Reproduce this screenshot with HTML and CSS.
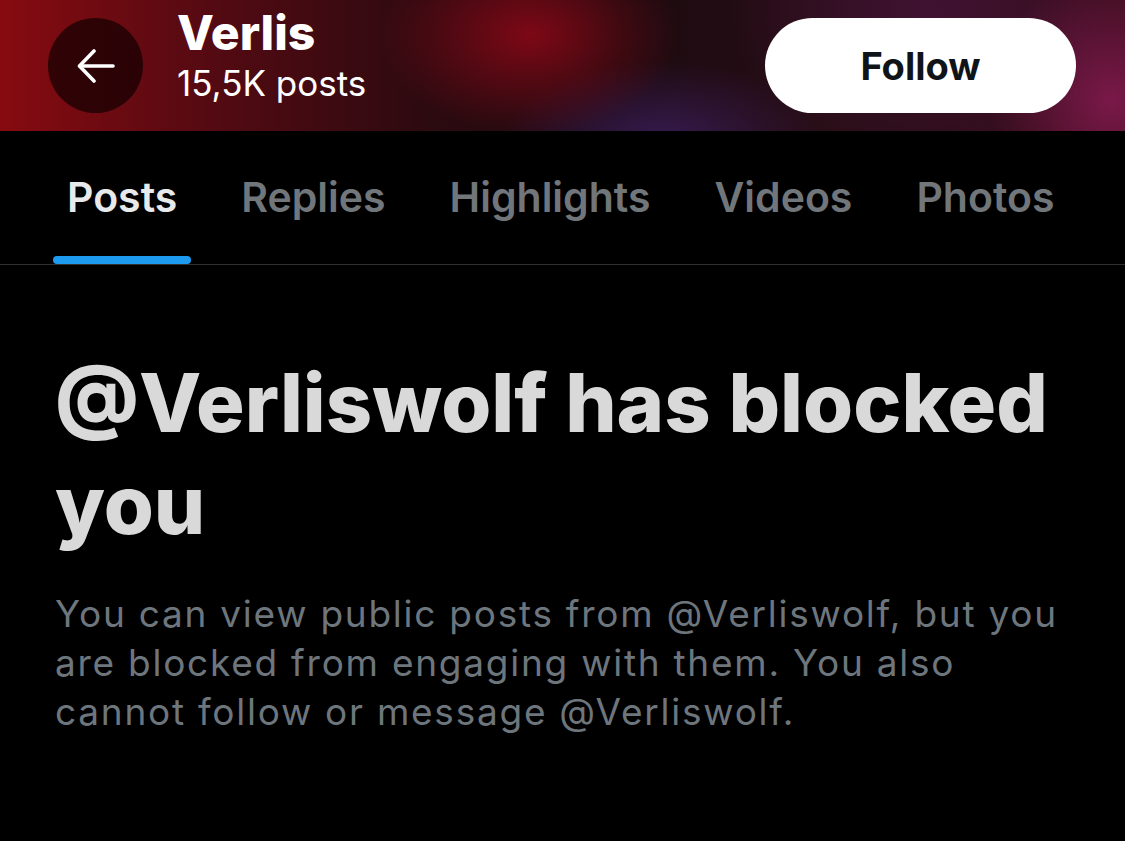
FILE: index.html
```html
<!DOCTYPE html>
<html lang="en">
<head>
<meta charset="utf-8">
<title>Verlis</title>
<link rel="stylesheet" href="styles.css">
</head>
<body>
<header class="top">
  <button class="back" aria-label="Back">
    <svg width="38" height="34" viewBox="0 0 38 34" fill="none" stroke="#fff" stroke-width="3.6" stroke-linecap="round" stroke-linejoin="round">
      <path d="M36 17H3"/>
      <path d="M17 2L2.5 17L17 32"/>
    </svg>
  </button>
  <div class="who">
    <div class="name">Verlis</div>
    <div class="count">15,5K posts</div>
  </div>
  <button class="follow">Follow</button>
</header>
<nav class="tabs">
  <div class="tab active"><span class="label">Posts</span><span class="bar"></span></div>
  <div class="tab"><span class="label">Replies</span></div>
  <div class="tab"><span class="label">Highlights</span></div>
  <div class="tab"><span class="label">Videos</span></div>
  <div class="tab"><span class="label">Photos</span></div>
</nav>
<main class="blocked">
  <h1 class="title">@Verliswolf has blocked you</h1>
  <p class="desc">You can view public posts from @Verliswolf, but you are blocked from engaging with them. You also cannot follow or message @Verliswolf.</p>
</main>
</body>
</html>
```
FILE: styles.css
```css
* { box-sizing: border-box; }
html, body { margin: 0; padding: 0; background: #000; }
body {
  width: 1125px;
  height: 841px;
  overflow: hidden;
  font-family: Inter, "Noto Sans", "Liberation Sans", sans-serif;
  color: #fff;
}
.top {
  height: 131px;
  display: flex;
  align-items: center;
  padding: 0 49px 0 48px;
  background:
    radial-gradient(ellipse 150px 100px at 530px 35px, rgba(135,8,22,0.9), rgba(135,8,22,0) 100%),
    radial-gradient(ellipse 160px 80px at 660px 140px, rgba(60,30,95,0.8), rgba(60,30,95,0) 100%),
    radial-gradient(ellipse 120px 130px at 1110px 100px, rgba(125,25,75,0.95), rgba(125,25,75,0) 100%),
    radial-gradient(ellipse 200px 140px at 930px 10px, rgba(70,20,60,0.7), rgba(70,20,60,0) 100%),
    linear-gradient(90deg, #860b10 0%, #560a12 18%, #2c0a10 38%, #1a0a0e 55%, #2a0e18 75%, #3a0d1c 100%);
}
.back {
  width: 95px;
  height: 95px;
  border-radius: 50%;
  border: 0;
  background: rgba(20,0,2,0.72);
  display: flex;
  align-items: center;
  justify-content: center;
  padding: 0;
  flex: none;
}
.who {
  margin-left: 34px;
  flex: 1;
  align-self: flex-start;
  padding-top: 10px;
  display: flex;
  flex-direction: column;
}
.name {
  font-size: 48px;
  font-weight: 800;
  line-height: 46px;
}
.count {
  font-size: 35px;
  font-weight: 400;
  line-height: 40px;
  margin-top: 7px;
}
.follow {
  width: 311px;
  height: 95px;
  border-radius: 48px;
  border: 0;
  background: #fff;
  color: #0f1419;
  font-family: Inter, "Noto Sans", "Liberation Sans", sans-serif;
  font-size: 38px;
  font-weight: 700;
  padding: 0;
  flex: none;
}
.tabs {
  height: 134px;
  display: flex;
  align-items: stretch;
  padding-left: 35px;
  border-bottom: 1px solid #2f3033;
}
.tab {
  padding: 0 32px;
  display: flex;
  flex-direction: column;
  justify-content: flex-end;
  font-size: 41px;
  font-weight: 600;
  color: #71767b;
}
.tab .label {
  line-height: 50px;
  margin-bottom: 42px;
}
.tab.active { color: #e7e9ea; }
.tab.active .label { margin-bottom: 34px; }
.tab .bar {
  display: block;
  height: 8px;
  margin: 0 -14px;
  border-radius: 4px;
  background: #1d9bf0;
}
.blocked {
  padding: 0 55px;
}
.title {
  margin: 87px 0 0;
  font-size: 81px;
  font-weight: 800;
  line-height: 102px;
  color: #d9d9d9;
}
.desc {
  margin: 33px 0 0;
  font-size: 37px;
  font-weight: 400;
  line-height: 49px;
  letter-spacing: 1.75px;
  color: #6e767d;
}
```
